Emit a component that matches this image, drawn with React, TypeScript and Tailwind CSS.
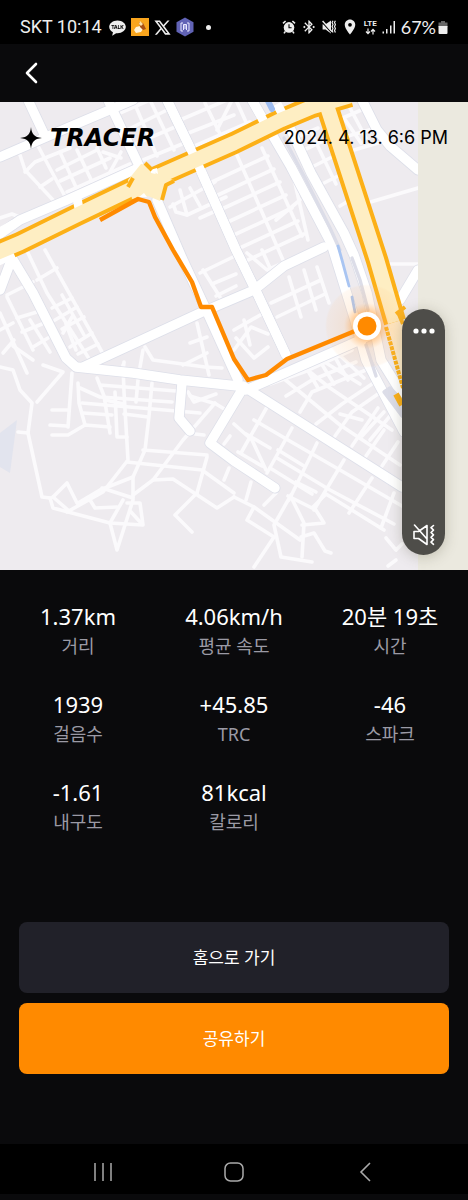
import React from "react";
import { RiKakaoTalkFill, RiTwitterXLine } from "react-icons/ri";
import { MdBluetoothConnected, MdLocationOn } from "react-icons/md";

const stats = [
  { value: "1.37km", label: "거리" },
  { value: "4.06km/h", label: "평균 속도" },
  { value: "20분 19초", label: "시간" },
  { value: "1939", label: "걸음수" },
  { value: "+45.85", label: "TRC" },
  { value: "-46", label: "스파크" },
  { value: "-1.61", label: "내구도" },
  { value: "81kcal", label: "칼로리" },
];

const alleys = [
  // north-west blocks
  "20,155 25,170 53,200", "25,172 35,162 70,148", "38,146 68,202", "40,187 52,179", "60,181 110,158",
  "60,152 80,196", "77,150 94,186", "97,148 106,168", "110,172 121,152", "103,152 121,158", "57,170 97,150",
  "67,192 130,164", "0,218 12,214 22,218",
  "127,130 167,110", "133,145 182,124", "143,160 187,142", "120,113 150,100", "133,100 157,156", "150,100 174,150",
  "180,120 234,97", "186,134 234,115", "190,148 250,122", "205,103 220,134", "217,130 232,100", "236,100 246,122",
  "170,207 215,182", "173,204 176,212 187,215 226,197", "180,190 187,215", "200,218 222,208", "190,188 200,206",
  // central rotated grid
  "236,153 283,260", "262,148 302,236", "276,220 300,200", "292,170 308,240",
  // between the stream and the avenue
  "311,132 336,184", "297,137 318,128", "304,150 325,140", "312,167 332,157", "324,183 338,176",
  "344,118 361,143", "338,120 366,108", "348,136 376,128", "354,150 378,143", "350,108 366,138",
  "340,206 350,200", "367,203 418,188", "384,264 418,264",
  // west
  "45,250 102,352", "28,253 47,293 88,357", "37,280 57,268", "7,295 33,282", "55,320 77,307", "63,333 72,317",
  "62,329 84,317", "70,347 92,333", "78,354 98,344", "62,295 84,335", "52,308 72,298", "66,324 76,350",
  "7,297 33,350", "0,313 27,373", "17,318 37,312", "0,330 13,323", "3,353 14,340", "13,346 33,360", "30,320 50,352",
  "33,347 48,338", "22,332 42,324", "0,367 13,370 20,390 32,403 28,433 42,497 50,498", "43,365 63,372 37,402",
  "18,432 28,433", "72,373 68,427", "52,410 68,410", "50,425 67,426", "52,435 68,435 85,425 110,427",
  // south-central rows
  "78,383 79,403 85,425", "80,388 100,397 172,402", "82,403 200,413", "83,413 112,415", "97,378 104,396 110,433",
  "115,392 117,437 127,437", "123,365 124,392 128,460 103,492 67,512", "152,383 149,416 145,450 133,477 133,497",
  "138,380 136,402", "124,414 148,417", "100,385 176,391", "105,400 124,404", "190,396 216,404 226,410",
  "143,450 207,455", "127,462 202,470 234,493", "207,457 197,493", "215,403 183,440 153,480 133,495",
  "153,480 173,479 217,508 234,497", "197,493 175,515 192,532", "50,498 53,508 110,523 143,525 140,503 127,503",
  "53,497 67,483 77,503", "53,497 68,510", "78,503 100,490 133,477", "102,488 133,498", "90,500 95,508 117,507",
  "123,500 110,523 117,550 133,500", "131,512 142,524", "195,434 204,435", "224,444 230,436", "224,480 229,468",
  "188,392 194,402 216,394",
  // centre triangle
  "145,347 153,360 205,367 222,368", "143,350 140,367", "197,323 209,375", "190,343 207,337", "183,365 207,353",
  "200,273 233,257", "203,270 220,297", "212,284 236,274", "216,296 236,286", "123,372 124,362",
  // north of the marker
  "247,253 267,270 297,257", "262,250 270,268", "289,277 301,317", "304,270 316,310", "317,267 329,303",
  "271,303 321,280", "277,317 325,294", "234,330 262,314", "236,338 254,358 268,347", "234,350 251,327 268,334",
  "244,320 250,345",
  // south-east blocks
  "277,373 300,392 340,425 400,465", "300,364 330,388 392,430", "318,358 360,384", "334,350 364,378",
  "270,384 304,372 352,350", "286,396 312,380 356,362", "300,412 312,392 366,370", "316,424 342,404 372,384",
  "304,364 318,388", "318,358 334,384", "332,352 348,380", "335,436 352,412 378,394", "352,446 378,408",
  "362,436 384,412", "370,440 390,416", "382,466 398,442", "366,456 384,430", "340,414 362,420",
  "241,453 267,407", "267,473 292,428", "289,500 317,443", "314,510 344,460", "349,513 372,478", "381,528 394,493",
  "254,420 288,440 340,470 402,506", "246,434 270,448", "277,458 330,490 394,524", "270,468 312,494",
  "288,496 312,508 326,494 384,530", "278,450 304,466", "296,482 316,492", "234,424 252,440 266,470",
  "238,452 262,466", "234,497 254,507 300,540", "246,500 251,482", "254,507 247,520 274,537 254,567",
  "291,495 274,525 281,557 312,562", "291,497 304,523 302,557", "302,525 324,523 314,507",
  "301,537 314,533 325,551 331,553", "264,505 276,493", "386,538 396,550 402,544", "396,560 388,566",
];

const streets = [
  "0,157 67,128 133,100", "28,100 44,134", "108,100 142,172", "0,234 20,220 67,200 136,169",
  "157,200 182,258 203,303 238,380", "83,367 200,313 254,290 284,266 324,247",
  "12,258 33,293 66,358 76,367 133,373 180,380 238,386", "12,258 0,290", "182,383 179,418 190,431",
  "243,388 210,443 234,461 275,488", "243,386 402,487", "246,390 349,345 375,333",
  "252,100 291,167 331,243 354,317 366,360 404,432", "284,115 311,173 344,233 354,255 367,293 381,360 404,397",
  "362,100 377,130 390,146 418,170", "400,300 418,270",
];

const crossings = ["167,100 197,162 236,250 257,293 286,355", "252,100 264,122", "277,104 288,124", "77,198 80,214"];

const avenues = [
  "-6,254 20,243 77,215 150,180 234,143 281,120 312,107 350,96",
  "327,106 377,260 395,322",
];

function Line({ points }: { points: string }) {
  return <polyline points={points} />;
}

function RouteMap() {
  return (
    <svg viewBox="0 102 468 468" className="block h-full w-full" role="img" aria-label="이동 경로">
      <defs>
        <radialGradient id="glow">
          <stop offset="0" stopColor="#ff8a00" stopOpacity="0.6" />
          <stop offset="0.34" stopColor="#ff9a30" stopOpacity="0.5" />
          <stop offset="0.55" stopColor="#ffb060" stopOpacity="0.16" />
          <stop offset="0.95" stopColor="#ffc080" stopOpacity="0.1" />
          <stop offset="1" stopColor="#ffc080" stopOpacity="0" />
        </radialGradient>
        <clipPath id="tiles">
          <rect x="0" y="102" width="418" height="468" />
        </clipPath>
      </defs>
      <rect x="0" y="102" width="468" height="468" fill="#ebe9df" />
      <g clipPath="url(#tiles)" fill="none" strokeLinejoin="round" strokeLinecap="round">
        <rect x="0" y="102" width="418" height="468" fill="#eeebef" />
        <path d="M17 420 10 473 0 467V433Z" fill="#e2e4ee" />
        <g stroke="#fbfafc" strokeWidth="3.6">
          {alleys.map((p) => <Line key={p} points={p} />)}
          {[0, 1, 2, 3, 4, 5, 6].map((k) => (
            <line key={k} x1={212 + 6 * k} y1={182 + 13 * k} x2={268 + 6 * k} y2={156 + 13 * k} />
          ))}
        </g>
        <g stroke="#dddfe9" strokeWidth="11">
          {streets.map((p) => <Line key={p} points={p} />)}
          <Line points={crossings[0]} />
        </g>
        <g stroke="#ffffff" strokeWidth="9.4">
          {streets.map((p) => <Line key={p} points={p} />)}
          <Line points={crossings[0]} />
        </g>
        <g stroke="#dcdde8" strokeWidth="3.4">
          <Line points="284,138 305,178 330,228 340,250" />
          <Line points="352,258 360,280 368,310" />
          <Line points="366,345 376,376" />
          <path d="M384 392 390 388 402 400V416Z" fill="#dcdde8" />
        </g>
        <g stroke="#a9c5f2" strokeWidth="2.8">
          <Line points="338,246 342,260 349,286" />
          <Line points="352,297 355,312" />
        </g>
        <path d="M386 312 402 312 406 390 394 350Z" fill="#feeccb" />
        <g stroke="#fcb017" strokeWidth="22.500" strokeLinecap="butt">
          {avenues.map((p) => <Line key={p} points={p} />)}
        </g>
        <g stroke="#ffffff" strokeWidth="9" strokeLinecap="butt">
          {crossings.map((p) => <Line key={p} points={p} />)}
          <Line points="0,232 14,224" />
          <Line points="-8,264 14,254" />
        </g>
        <g stroke="#feeec3" strokeWidth="14.500" strokeLinecap="butt">
          {avenues.map((p) => <Line key={p} points={p} />)}
        </g>
        <path d="M128 180 141 164 150 166 158 176 174 180 164 188 160 201 148 196 132 199Z" fill="#feeec3" />
        <path d="M151 168 156 174 151 173ZM139 197 144 193 147 197ZM150 170 157 168 158 174Z" fill="#fff" />
        <g stroke="#fcb017" strokeWidth="4" strokeLinecap="butt">
          <Line points="145,163 152,170" />
          <Line points="128,187 133,178" />
          <Line points="162,200 166,185 174,181" />
          <Line points="396,314 405,307" />
          <Line points="398,312 403,324" />
          <path d="M386 327 403 388" strokeDasharray="4 1" />
          <path d="M396 394 402 405" strokeWidth="6" />
        </g>
        <path d="m268 101 4 8" stroke="#9dbcf0" strokeWidth="6" />
      </g>
      <circle cx="367" cy="326" r="42" fill="url(#glow)" />
      <polyline
        points="100,220 138,199 149,202 155,217 173,250 192,282 201,307 212,307 234,359 248,380 266,375 287,359 367,326"
        fill="none" stroke="#ff8a00" strokeWidth="4.4" strokeLinejoin="round"
      />
      <circle cx="367" cy="326" r="14" fill="#fff" />
      <circle cx="367" cy="326" r="9.500" fill="#ff8a00" />
    </svg>
  );
}

function AlarmIcon() {
  return (
    <svg viewBox="0 0 14 14" className="size-3.5" fill="none" aria-hidden="true">
      <circle cx="7" cy="7.4" r="5.3" fill="#eee" />
      <path d="M1 3.4 3.6 1M13 3.4 10.4 1M3.4 11.4 2 13.4M10.6 11.4l1.4 2" stroke="#eee" strokeWidth="1.6" />
      <path d="M7 4.2v3.6h2.6" stroke="#000" strokeWidth="1.1" />
    </svg>
  );
}

function SilentIcon() {
  return (
    <svg viewBox="0 0 14 14" className="size-3.5" aria-hidden="true">
      <path d="M.6 4.2h3L9 .6v12.800L3.600 9.600h-3Z" fill="#eee" />
      <path d="M0 2 9.600 12.600" stroke="#000" strokeWidth="1.2" />
      <path d="M.6 1 10 11.600" stroke="#eee" strokeWidth="1.4" />
      <path d="m11 .8-.9 1.800.9 2-.9 2 .9 2-.9 2 .9 2M13.400.8l-.9 1.800.9 2-.9 2 .9 2-.9 2 .9 2" fill="none" stroke="#eee" strokeWidth="1.2" />
    </svg>
  );
}

function StatusBar() {
  return (
    <div className="flex h-11 items-center justify-between bg-black px-5 pt-2.5 text-[#eee]">
      <div className="flex items-center gap-1">
        <span className="pr-0.5 font-['Roboto',sans-serif] text-[18px] leading-6">SKT 10:14</span>
        <RiKakaoTalkFill className="size-[19px]" />
        <svg viewBox="0 0 18 18" className="size-[18px]" aria-hidden="true">
          <rect width="18" height="18" fill="#f9a51d" />
          <path d="m3 12 2-3 4-1 3 3-2 3-5 1Z" fill="#fff3d8" />
          <path d="m8 4 4 1 3 6-3 1-3-3Z" fill="#a94f14" />
          <path d="m9 3 3 3-2 2-2-2Z" fill="#fde0a4" />
        </svg>
        <RiTwitterXLine className="size-[19px]" />
        <svg viewBox="0 0 18 20" className="h-5 w-[18px]" fill="none" aria-hidden="true">
          <path d="m9 .5 8.500 4.700v9.600L9 19.500.5 14.800V5.200Z" fill="#6163b5" />
          <path d="M7 6H5v8h2M11 6h2v8h-2M7.500 13V7.500h3V13M9 8v4" stroke="#e9e9ff" strokeWidth="1" />
        </svg>
      </div>
      <span className="mr-auto ml-3 size-[5px] rounded-full bg-[#eee]" />
      <div className="flex items-center gap-[5px]">
        <AlarmIcon />
        <MdBluetoothConnected className="size-4" />
        <SilentIcon />
        <MdLocationOn className="size-[18px]" />
        <div className="flex flex-col items-center">
          <span className="font-['Roboto',sans-serif] text-[8px] leading-[8px] font-bold">LTE</span>
          <svg viewBox="0 0 11 7" className="h-[7px] w-[11px]" fill="none" stroke="#eee" strokeWidth="1.2" aria-hidden="true">
            <path d="M3 .5v5M1 3.500l2 2.200 2-2.200M8 6.500v-5M6 3.500l2-2.200 2 2.200" />
          </svg>
        </div>
        <svg viewBox="0 0 14 14" className="size-3.5" fill="#eee" aria-hidden="true">
          <path d="M.5 11.500h1.500v2H.5ZM4 9h1.500v4.500H4ZM8 5.500h1.500v8H8ZM11.500 1H13v12.500h-1.500Z" />
        </svg>
        <div className="flex items-center gap-0.5">
          <span className="font-['Lato',sans-serif] text-[18px] leading-6">67%</span>
          <svg viewBox="0 0 10 13" className="h-[13px] w-2.5" aria-hidden="true">
            <path d="M3 0h4v1.500h2.500V6H.5V1.500H3Z" fill="#666" />
            <path d="M.5 5h9v7a1 1 0 0 1-1 1h-7a1 1 0 0 1-1-1Z" fill="#eee" />
          </svg>
        </div>
      </div>
    </div>
  );
}

function VolumePanel() {
  return (
    <div className="absolute top-[207px] right-[23px] flex h-[246px] w-[43px] flex-col items-center justify-between rounded-full bg-[#4e4d49] py-2 shadow-[0_2px_14px_rgba(80,75,50,0.28)]">
      <button type="button" aria-label="더보기" className="flex h-7 items-center">
        <svg viewBox="0 0 22 6" className="h-1.5 w-[22px]" fill="#fff" aria-hidden="true">
          <circle cx="3" cy="3" r="2.6" />
          <circle cx="11" cy="3" r="2.6" />
          <circle cx="19" cy="3" r="2.6" />
        </svg>
      </button>
      <button type="button" aria-label="진동" className="flex h-6 items-center">
        <svg viewBox="0 0 22 22" className="size-[22px]" fill="none" stroke="#fff" strokeWidth="1.600" strokeLinejoin="round" strokeLinecap="round" aria-hidden="true">
          <path d="M1 7.500h4.500L14 1.500v19L5.500 14.500H1ZM1.500 1l12.500 14" />
          <path d="M20.500 1.500l-2.500 2.200 2.500 2.400-2.500 2.400 2.500 2.400-2.500 2.400 2.500 2.400-2.500 2.400 2.500 2.200" />
        </svg>
      </button>
    </div>
  );
}

export default function App() {
  return (
    <div className="flex min-h-screen flex-col bg-[#0a0a0c] font-['Noto_Sans','Noto_Sans_CJK_KR',sans-serif] text-white">
      <StatusBar />
      <header className="flex h-[58px] items-center px-5">
        <button type="button" aria-label="뒤로" className="flex size-6 items-center justify-center">
          <svg viewBox="0 0 24 24" className="size-6" fill="none" stroke="#fff" strokeWidth="2.600" strokeLinecap="round" strokeLinejoin="round" aria-hidden="true">
            <path d="m16 3-9 9 9 9" />
          </svg>
        </button>
      </header>

      <section className="relative aspect-square w-full">
        <RouteMap />
        <div className="absolute inset-x-5 top-5 flex h-8 items-center justify-between text-black">
          <h1 className="flex items-center gap-2">
            <svg viewBox="0 0 22 22" className="size-[22px]" aria-hidden="true">
              <path d="M11 0C11.700 7 14 10.300 22 11 14 11.700 11.700 15 11 22 10.300 15 8 11.700 0 11 8 10.300 10.300 7 11 0Z" />
            </svg>
            <span className="font-['DejaVu_Sans',sans-serif] text-[24px] leading-8 font-bold italic">TRACER</span>
          </h1>
          <time className="font-['Inter',sans-serif] text-[18px] leading-8">2024. 4. 13. 6:6 PM</time>
        </div>
        <VolumePanel />
      </section>

      <dl className="grid grid-cols-3 gap-y-7 pt-[30px] text-center">
        {stats.map((s) => (
          <div key={s.label} className="flex flex-col-reverse">
            <dt className="text-[18px] leading-7 text-[#9b9aa5]">{s.label}</dt>
            <dd className="text-[22px] leading-8">{s.value}</dd>
          </div>
        ))}
      </dl>

      <div className="mt-auto flex flex-col gap-2.5 px-[19px] pt-10 pb-[70px] text-[17px] leading-7">
        <button type="button" className="h-[71px] rounded-lg bg-[#212129]">홈으로 가기</button>
        <button type="button" className="h-[71px] rounded-lg bg-[#ff8a00]">공유하기</button>
      </div>

      <nav className="mb-1.5 flex h-[50px] items-center justify-around bg-black px-[38px] pt-1.5" aria-label="시스템">
        <button type="button" aria-label="최근 앱">
          <svg viewBox="0 0 20 20" className="size-5" stroke="#aaa" strokeWidth="1.500" aria-hidden="true">
            <path d="M2 1v18M10 1v18M18 1v18" />
          </svg>
        </button>
        <button type="button" aria-label="홈">
          <svg viewBox="0 0 20 20" className="size-5" fill="none" stroke="#aaa" strokeWidth="1.500" aria-hidden="true">
            <rect x="1" y="1" width="18" height="18" rx="5.500" />
          </svg>
        </button>
        <button type="button" aria-label="뒤로 가기">
          <svg viewBox="0 0 20 20" className="size-5" fill="none" stroke="#aaa" strokeWidth="1.600" aria-hidden="true">
            <path d="M15 1 6 10l9 9" />
          </svg>
        </button>
      </nav>
    </div>
  );
}
